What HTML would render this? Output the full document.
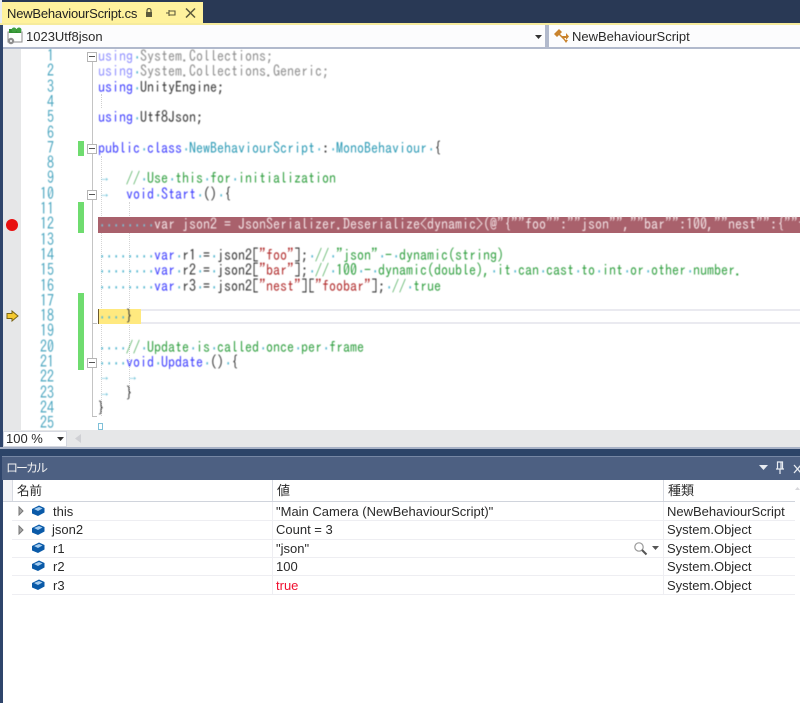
<!DOCTYPE html>
<html><head><meta charset="utf-8"><style>
html,body{margin:0;padding:0;background:#fff}
#p{position:relative;width:800px;height:703px;overflow:hidden;background:#fff;font-family:"Liberation Sans","Noto Sans CJK JP",sans-serif}
#p div,#p svg{position:absolute}
.l{left:98px;height:16px;font:14px/16px "IPAGothic",monospace;white-space:pre;color:#333;filter:blur(.4px);transform:scaleY(1.12);transform-origin:50% 55%}
.n{left:20px;width:34px;text-align:right;height:16px;font:14px/16px "IPAGothic",monospace;color:#4ba6c0;filter:blur(.4px);transform:scaleY(1.14);transform-origin:50% 55%}
i{display:inline-block;width:7px;font-style:normal;text-align:center;color:#5cbad3;font-family:"Liberation Mono",monospace}
i.a{position:relative;left:3px;top:-2px;font-size:11px}
b{font-weight:normal;color:#3b3bff}
u{text-decoration:none;color:#2b9ab5}
s{text-decoration:none;color:#2f9f3f}
em{font-style:normal;color:#b02a2a}
.g{color:#8d8d8d}
.t{font-size:13px;line-height:18px;color:#2a2a2a;white-space:pre;filter:blur(.25px)}
.rl{height:1px;background:#eeeef2}
</style></head><body><div id="p">
<div style="left:0;top:0;width:800px;height:24px;background:#293955"></div>
<div style="left:0;top:0;width:2px;height:25px;background:#e9edf2"></div>
<div style="left:2px;top:2px;width:201px;height:22px;background:#fff29d"></div>
<div class="t" style="left:7px;top:5px;letter-spacing:-.2px;color:#222">NewBehaviourScript.cs</div>
<svg style="left:144px;top:8px" width="10" height="10" viewBox="0 0 10 10"><path d="M3 4V2.500a2 2 0 0 1 4 0V4" fill="none" stroke="#5c5a3c" stroke-width="1.200"/><rect x="2" y="4" width="6" height="5" fill="#5c5a3c"/></svg>
<svg style="left:165px;top:8px" width="11" height="10" viewBox="0 0 11 10"><path d="M1 5H4M4 2V8M4 3H10M4 7H10M10 2.500V7.500" fill="none" stroke="#5c5a3c" stroke-width="1.100"/></svg>
<svg style="left:185px;top:8px" width="11" height="10" viewBox="0 0 11 10"><path d="M1 .5L10 9.500M10 .5L1 9.500" fill="none" stroke="#5c5a3c" stroke-width="1.500"/></svg>
<div style="left:0;top:23px;width:800px;height:2px;background:#f6eb9c"></div>

<div style="left:0;top:25px;width:800px;height:22px;background:#fcfcfd"></div>
<div style="left:0;top:47px;width:800px;height:2px;background:#b1b9cc"></div>
<div style="left:545px;top:25px;width:4px;height:23px;background:#b1b9cc"></div>
<svg style="left:6px;top:27px" width="18" height="18" viewBox="0 0 18 18"><rect x="2" y="5" width="14" height="10" fill="#fff" stroke="#8a8a8a"/><rect x="3" y="2" width="12" height="4" fill="#2f8f2f"/><circle cx="8" cy="3" r="2.500" fill="#3f9f3f"/><circle cx="13" cy="3" r="2.500" fill="#3f9f3f"/><circle cx="5" cy="14" r="3.200" fill="#8e8e8e"/><circle cx="5" cy="14" r="1" fill="#fff"/></svg>
<div class="t" style="left:26px;top:28px">1023Utf8json</div>
<svg style="left:535px;top:35px" width="8" height="5"><path d="M0 0H7L3.500 4Z" fill="#333"/></svg>
<svg style="left:553px;top:28px" width="17" height="17" viewBox="0 0 17 17"><path d="M1 6L6 1L9 4L4 9Z M9 8L13 8L13 5L16 8.500L13 12L13 10L10 10ZM11 12L15 12L13 15Z" fill="#c9832d"/><path d="M6 6L12 12" stroke="#c9832d" stroke-width="1.500"/></svg>
<div class="t" style="left:572px;top:28px">NewBehaviourScript</div>

<div style="left:0;top:25px;width:2.500px;height:678px;background:#2f456b"></div>
<div style="left:3px;top:49px;width:18px;height:381px;background:#e6e7e8"></div>

<div style="left:78px;top:141px;width:6px;height:15px;background:#6fdc6f"></div>
<div style="left:78px;top:202px;width:6px;height:31px;background:#6fdc6f"></div>
<div style="left:78px;top:293px;width:6px;height:77px;background:#6fdc6f"></div>

<div style="left:91.500px;top:62px;width:1.500px;height:355px;background:#c4c4c4"></div>
<div style="left:92px;top:416px;width:5px;height:1px;background:#bdbdbd"></div>
<div style="left:92px;top:323px;width:5px;height:1px;background:#bdbdbd"></div>
<div style="left:87px;top:52px;width:8px;height:8px;border:1px solid #b5b5b5;background:#fff"></div><div style="left:89px;top:56px;width:6px;height:1px;background:#555"></div>
<div style="left:87px;top:144px;width:8px;height:8px;border:1px solid #b5b5b5;background:#fff"></div><div style="left:89px;top:148px;width:6px;height:1px;background:#555"></div>
<div style="left:87px;top:190px;width:8px;height:8px;border:1px solid #b5b5b5;background:#fff"></div><div style="left:89px;top:194px;width:6px;height:1px;background:#555"></div>
<div style="left:87px;top:358px;width:8px;height:8px;border:1px solid #b5b5b5;background:#fff"></div><div style="left:89px;top:362px;width:6px;height:1px;background:#555"></div>

<div style="left:101px;top:94px;width:0;height:14px;border-left:1px dotted #cfcfcf"></div>
<div style="left:101px;top:156px;width:0;height:260px;border-left:1px dotted #d5d5d5"></div>
<div style="left:129px;top:202px;width:0;height:190px;border-left:1px dotted #d5d5d5"></div>

<div style="left:98px;top:217px;width:702px;height:16px;background:#a9616c"></div>
<div style="left:98px;top:309px;width:702px;height:15px;border-top:2px solid #eaeaf0;border-bottom:2px solid #eaeaf0;box-sizing:border-box"></div>
<div style="left:98px;top:309px;width:43px;height:15px;background:#ffe97f"></div>
<div style="left:98px;top:309px;width:1px;height:15px;background:#6b5a30"></div>
<svg style="left:5px;top:218px" width="14" height="14"><circle cx="7" cy="7" r="6" fill="#e81010"/></svg>
<svg style="left:6px;top:310px" width="13" height="12" viewBox="0 0 13 12"><path d="M1 3.500H6V1L12 6L6 11V8.500H1Z" fill="#f5c92e" stroke="#7a6414" stroke-width="1"/></svg>

<div class="n" style="top:48px">1</div><div class="n" style="top:63px">2</div><div class="n" style="top:79px">3</div><div class="n" style="top:94px">4</div><div class="n" style="top:109px">5</div><div class="n" style="top:125px">6</div><div class="n" style="top:140px">7</div><div class="n" style="top:155px">8</div><div class="n" style="top:170px">9</div><div class="n" style="top:186px">10</div><div class="n" style="top:201px">11</div><div class="n" style="top:216px">12</div><div class="n" style="top:232px">13</div><div class="n" style="top:247px">14</div><div class="n" style="top:262px">15</div><div class="n" style="top:278px">16</div><div class="n" style="top:293px">17</div><div class="n" style="top:308px">18</div><div class="n" style="top:323px">19</div><div class="n" style="top:339px">20</div><div class="n" style="top:354px">21</div><div class="n" style="top:369px">22</div><div class="n" style="top:385px">23</div><div class="n" style="top:400px">24</div><div class="n" style="top:415px">25</div>

<div class="l" style="top:48px"><b style="color:#8f8fff">using</b><i>·</i><span class="g">System.Collections;</span></div>
<div class="l" style="top:63px"><b style="color:#8f8fff">using</b><i>·</i><span class="g">System.Collections.Generic;</span></div>
<div class="l" style="top:79px"><b>using</b><i>·</i>UnityEngine;</div>
<div class="l" style="top:109px"><b>using</b><i>·</i>Utf8Json;</div>
<div class="l" style="top:140px"><b>public</b><i>·</i><b>class</b><i>·</i><u>NewBehaviourScript</u><i>·</i>:<i>·</i><u>MonoBehaviour</u><i>·</i>{</div>
<div class="l" style="top:170px"><i class="a">→</i><i> </i><i> </i><i> </i><s>//<i>·</i>Use<i>·</i>this<i>·</i>for<i>·</i>initialization</s></div>
<div class="l" style="top:186px"><i class="a">→</i><i> </i><i> </i><i> </i><b>void</b><i>·</i><b>Start</b><i>·</i>()<i>·</i>{</div>
<div class="l" style="top:216px;color:#f3e4e6"><i style="color:#7fb9cf">·</i><i style="color:#7fb9cf">·</i><i style="color:#7fb9cf">·</i><i style="color:#7fb9cf">·</i><i style="color:#7fb9cf">·</i><i style="color:#7fb9cf">·</i><i style="color:#7fb9cf">·</i><i style="color:#7fb9cf">·</i>var json2 = JsonSerializer.Deserialize&lt;dynamic&gt;(@"{""foo"":""json"",""bar"":100,""nest"":{""foobar"":true}}");</div>
<div class="l" style="top:247px"><i>·</i><i>·</i><i>·</i><i>·</i><i>·</i><i>·</i><i>·</i><i>·</i><b>var</b><i>·</i>r1<i>·</i>=<i>·</i>json2[<em>"foo"</em>];<i>·</i><s>//<i>·</i>"json"<i>·</i>-<i>·</i>dynamic(string)</s></div>
<div class="l" style="top:262px"><i>·</i><i>·</i><i>·</i><i>·</i><i>·</i><i>·</i><i>·</i><i>·</i><b>var</b><i>·</i>r2<i>·</i>=<i>·</i>json2[<em>"bar"</em>];<i>·</i><s>//<i>·</i>100<i>·</i>-<i>·</i>dynamic(double),<i>·</i>it<i>·</i>can<i>·</i>cast<i>·</i>to<i>·</i>int<i>·</i>or<i>·</i>other<i>·</i>number.</s></div>
<div class="l" style="top:278px"><i>·</i><i>·</i><i>·</i><i>·</i><i>·</i><i>·</i><i>·</i><i>·</i><b>var</b><i>·</i>r3<i>·</i>=<i>·</i>json2[<em>"nest"</em>][<em>"foobar"</em>];<i>·</i><s>//<i>·</i>true</s></div>
<div class="l" style="top:308px"><i>·</i><i>·</i><i>·</i><i>·</i>}</div>
<div class="l" style="top:339px"><i>·</i><i>·</i><i>·</i><i>·</i><s>//<i>·</i>Update<i>·</i>is<i>·</i>called<i>·</i>once<i>·</i>per<i>·</i>frame</s></div>
<div class="l" style="top:354px"><i>·</i><i>·</i><i>·</i><i>·</i><b>void</b><i>·</i><b>Update</b><i>·</i>()<i>·</i>{</div>
<div class="l" style="top:369px"><i class="a">→</i><i> </i><i> </i><i> </i><i class="a">→</i></div>
<div class="l" style="top:385px"><i class="a">→</i><i> </i><i> </i><i> </i>}</div>
<div class="l" style="top:400px">}</div>
<div style="left:98px;top:423px;width:3px;height:5px;border:1px solid #7fc0d8"></div>

<div style="left:3px;top:430px;width:797px;height:17px;background:#e6e7e8"></div>
<div style="left:3px;top:431px;width:64px;height:16px;background:#fff;border:1px solid #d5d8e0;box-sizing:border-box"></div>
<div class="t" style="left:6px;top:430px">100 %</div>
<svg style="left:57px;top:437px" width="8" height="5"><path d="M0 0H7L3.500 4Z" fill="#333"/></svg>
<svg style="left:74px;top:434px" width="8" height="10"><path d="M7 0V9L1 4.500Z" fill="#cfd0d4"/></svg>
<div style="left:0;top:447px;width:800px;height:2px;background:#a8b2c6"></div>
<div style="left:0;top:449px;width:800px;height:7px;background:#2c4468"></div>
<div style="left:2px;top:456px;width:798px;height:24px;background:#4d6082;border-top:1px solid #7687a4;box-sizing:border-box"></div>
<div class="t" style="left:6px;top:459px;color:#f2f2f2;font-size:12px;letter-spacing:-2px">ローカル</div>
<svg style="left:759px;top:465px" width="10" height="6"><path d="M0 0H9L4.500 5Z" fill="#e8ecf2"/></svg>
<svg style="left:775px;top:461px" width="10" height="14" viewBox="0 0 10 14"><path d="M2.500 1H7.500V8H2.500ZM1 8H9M5 8V13M6 1V8" fill="none" stroke="#e8ecf2" stroke-width="1.200"/></svg>
<svg style="left:793px;top:464px" width="8" height="10"><path d="M1 1L8 9M8 1L1 9" fill="none" stroke="#e8ecf2" stroke-width="1.300"/></svg>

<div style="left:3px;top:480px;width:797px;height:223px;background:#fff"></div>
<div style="left:3px;top:480px;width:9px;height:21px;background:#f3f3f6"></div>
<div style="left:12px;top:480px;width:1px;height:21px;background:#d8dbe2"></div>
<div style="left:272px;top:480px;width:1px;height:21px;background:#d8dbe2"></div>
<div style="left:663px;top:480px;width:1px;height:21px;background:#d8dbe2"></div>
<div style="left:3px;top:501px;width:792px;height:1px;background:#d0d4dc"></div>
<div class="t" style="left:17px;top:482px;font-size:12.500px">名前</div>
<div class="t" style="left:277px;top:482px">値</div>
<div class="t" style="left:668px;top:482px">種類</div>
<svg style="left:795px;top:487px" width="5" height="4"><path d="M0 3L2.500 0L5 3Z" fill="#d8d8dc"/></svg>

<div class="rl" style="left:12px;top:520px;width:783px"></div>
<div class="rl" style="left:12px;top:539px;width:783px"></div>
<div class="rl" style="left:12px;top:557px;width:783px"></div>
<div class="rl" style="left:12px;top:575px;width:783px"></div>
<div class="rl" style="left:12px;top:594px;width:783px"></div>
<div class="rl" style="left:272px;top:502px;width:1px;height:92px"></div>
<div class="rl" style="left:663px;top:502px;width:1px;height:92px"></div>

<svg style="left:18px;top:506px" width="6" height="10"><path d="M1 1L5 5L1 9Z" fill="#aaa" stroke="#777"/></svg>
<svg style="left:18px;top:525px" width="6" height="10"><path d="M1 1L5 5L1 9Z" fill="#aaa" stroke="#777"/></svg>
<svg style="left:32px;top:505px" width="13" height="12" viewBox="0 0 13 12"><path d="M0 4L7 .5L12.500 3V7.500L6 11L0 8.500Z" fill="#0a5aa8"/><path d="M2 4L6 6L10.500 3.500L7 2Z" fill="#a5cdf0"/></svg>
<svg style="left:32px;top:524px" width="13" height="12" viewBox="0 0 13 12"><path d="M0 4L7 .5L12.500 3V7.500L6 11L0 8.500Z" fill="#0a5aa8"/><path d="M2 4L6 6L10.500 3.500L7 2Z" fill="#a5cdf0"/></svg>
<svg style="left:32px;top:542px" width="13" height="12" viewBox="0 0 13 12"><path d="M0 4L7 .5L12.500 3V7.500L6 11L0 8.500Z" fill="#0a5aa8"/><path d="M2 4L6 6L10.500 3.500L7 2Z" fill="#a5cdf0"/></svg>
<svg style="left:32px;top:560px" width="13" height="12" viewBox="0 0 13 12"><path d="M0 4L7 .5L12.500 3V7.500L6 11L0 8.500Z" fill="#0a5aa8"/><path d="M2 4L6 6L10.500 3.500L7 2Z" fill="#a5cdf0"/></svg>
<svg style="left:32px;top:579px" width="13" height="12" viewBox="0 0 13 12"><path d="M0 4L7 .5L12.500 3V7.500L6 11L0 8.500Z" fill="#0a5aa8"/><path d="M2 4L6 6L10.500 3.500L7 2Z" fill="#a5cdf0"/></svg>

<div class="t" style="left:53px;top:503px">this</div>
<div class="t" style="left:52px;top:521px">json2</div>
<div class="t" style="left:53px;top:540px">r1</div>
<div class="t" style="left:53px;top:558px">r2</div>
<div class="t" style="left:53px;top:577px">r3</div>
<div class="t" style="left:276px;top:503px">"Main Camera (NewBehaviourScript)"</div>
<div class="t" style="left:276px;top:521px">Count = 3</div>
<div class="t" style="left:276px;top:540px">"json"</div>
<div class="t" style="left:276px;top:558px">100</div>
<div class="t" style="left:276px;top:577px;color:#f01030">true</div>
<div class="t" style="left:667px;top:503px">NewBehaviourScript</div>
<div class="t" style="left:667px;top:521px">System.Object</div>
<div class="t" style="left:667px;top:540px">System.Object</div>
<div class="t" style="left:667px;top:558px">System.Object</div>
<div class="t" style="left:667px;top:577px">System.Object</div>
<svg style="left:633px;top:541px" width="15" height="15" viewBox="0 0 15 15"><circle cx="6" cy="6" r="4.200" fill="none" stroke="#9a9a9a" stroke-width="1.200"/><path d="M9 9L13.500 13.500" stroke="#555" stroke-width="2"/></svg>
<svg style="left:652px;top:546px" width="8" height="5"><path d="M0 0H7L3.500 4Z" fill="#555"/></svg>
</div></body></html>
